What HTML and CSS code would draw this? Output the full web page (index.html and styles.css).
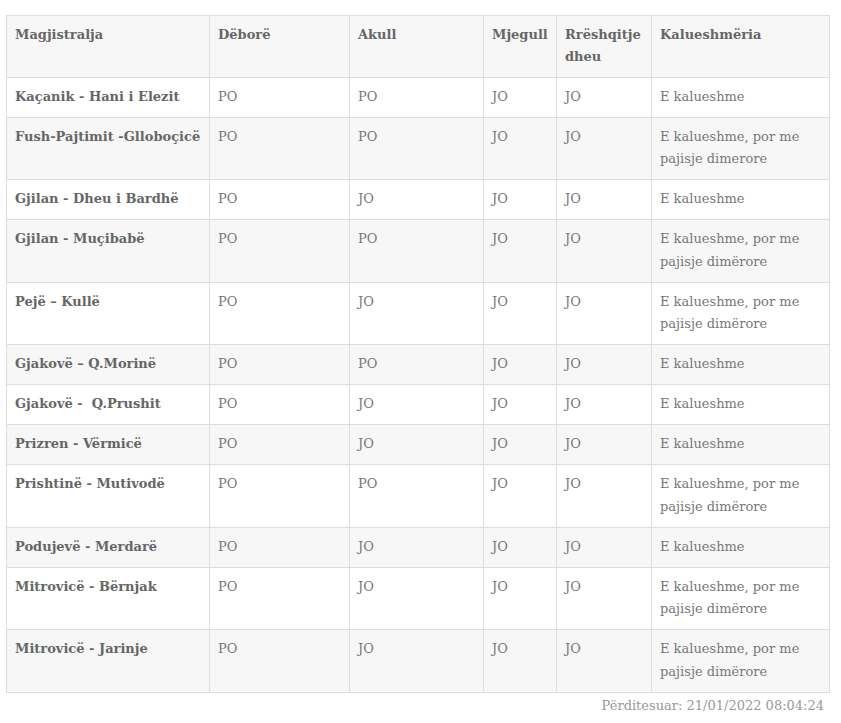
FILE: index.html
```html
<!DOCTYPE html>
<html lang="sq">
<head>
<meta charset="utf-8">
<title>Magjistralet</title>
<link rel="stylesheet" href="styles.css">
</head>
<body>
<div class="wrap">
<table class="roads">
<colgroup>
<col class="c1"><col class="c2"><col class="c3"><col class="c4"><col class="c5"><col class="c6">
</colgroup>
<thead>
<tr><th>Magjistralja</th><th>Dëborë</th><th>Akull</th><th>Mjegull</th><th>Rrëshqitje dheu</th><th>Kalueshmëria</th></tr>
</thead>
<tbody>
<tr><td class="name">Kaçanik - Hani i Elezit</td><td>PO</td><td>PO</td><td>JO</td><td>JO</td><td>E kalueshme</td></tr>
<tr><td class="name">Fush-Pajtimit -Glloboçicë</td><td>PO</td><td>PO</td><td>JO</td><td>JO</td><td>E kalueshme, por me pajisje dimerore</td></tr>
<tr><td class="name">Gjilan - Dheu i Bardhë</td><td>PO</td><td>JO</td><td>JO</td><td>JO</td><td>E kalueshme</td></tr>
<tr><td class="name">Gjilan - Muçibabë</td><td>PO</td><td>PO</td><td>JO</td><td>JO</td><td>E kalueshme, por me pajisje dimërore</td></tr>
<tr><td class="name">Pejë – Kullë</td><td>PO</td><td>JO</td><td>JO</td><td>JO</td><td>E kalueshme, por me pajisje dimërore</td></tr>
<tr><td class="name">Gjakovë – Q.Morinë</td><td>PO</td><td>PO</td><td>JO</td><td>JO</td><td>E kalueshme</td></tr>
<tr><td class="name">Gjakovë -&nbsp; Q.Prushit</td><td>PO</td><td>JO</td><td>JO</td><td>JO</td><td>E kalueshme</td></tr>
<tr><td class="name">Prizren - Vërmicë</td><td>PO</td><td>JO</td><td>JO</td><td>JO</td><td>E kalueshme</td></tr>
<tr><td class="name">Prishtinë - Mutivodë</td><td>PO</td><td>PO</td><td>JO</td><td>JO</td><td>E kalueshme, por me pajisje dimërore</td></tr>
<tr><td class="name">Podujevë - Merdarë</td><td>PO</td><td>JO</td><td>JO</td><td>JO</td><td>E kalueshme</td></tr>
<tr><td class="name">Mitrovicë - Bërnjak</td><td>PO</td><td>JO</td><td>JO</td><td>JO</td><td>E kalueshme, por me pajisje dimërore</td></tr>
<tr><td class="name">Mitrovicë - Jarinje</td><td>PO</td><td>JO</td><td>JO</td><td>JO</td><td>E kalueshme, por me pajisje dimërore</td></tr>
</tbody>
</table>
<p class="updated">Përditesuar: 21/01/2022 08:04:24</p>
</div>
</body>
</html>
```

FILE: styles.css
```css
html, body {
  margin: 0;
  padding: 0;
  background: #ffffff;
}
body {
  font-family: "DejaVu Serif", "Liberation Serif", serif;
  font-size: 13px;
  color: #777777;
}
.wrap {
  padding: 15px 12px 0 6px;
}
.roads {
  width: 823px;
  border-collapse: collapse;
  table-layout: fixed;
}
.c1 { width: 203px; }
.c2 { width: 140px; }
.c3 { width: 134px; }
.c4 { width: 73px; }
.c5 { width: 95px; }
.c6 { width: 178px; }
.roads th,
.roads td {
  border: 1px solid #dddddd;
  padding: 8px 8px 8.5px 8px;
  line-height: 22.5px;
  text-align: left;
  vertical-align: top;
}
.roads th {
  background: #f7f7f7;
  font-weight: bold;
  color: #666666;
  line-height: 22px;
}
.roads tbody tr:nth-child(even) td {
  background: #f7f7f7;
}
.roads td.name {
  font-weight: bold;
  color: #666666;
}
.updated {
  margin: 2px 0 0 0;
  text-align: right;
  color: #999999;
  font-size: 13px;
  line-height: 22px;
  padding-right: 5px;
}
```
